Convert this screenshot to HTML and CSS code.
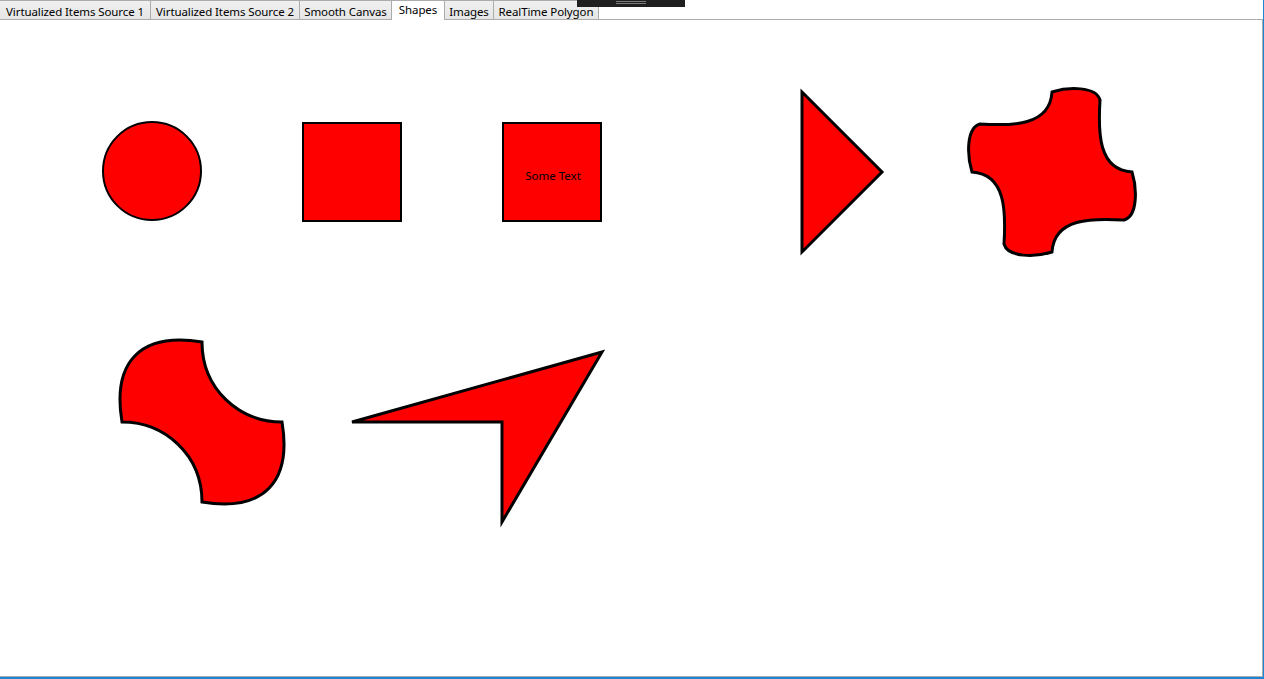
FILE: index.html
```html
<!DOCTYPE html>
<html>
<head>
<meta charset="utf-8">
<link rel="stylesheet" href="styles.css">
</head>
<body>
<div class="window">
  <div class="tabstrip">
    <div class="tab tab-vis1">Virtualized Items Source 1</div>
    <div class="tab tab-vis2">Virtualized Items Source 2</div>
    <div class="tab tab-smooth">Smooth Canvas</div>
    <div class="tab tab-shapes selected">Shapes</div>
    <div class="tab tab-images">Images</div>
    <div class="tab tab-poly">RealTime Polygon</div>
  </div>
  <div class="panel">
    <svg class="canvas" viewBox="0 20 1262 656" width="1262" height="656">
      <g fill="#ff0000" stroke="#000" stroke-linejoin="miter">
        <circle cx="152" cy="171" r="49" stroke-width="2"/>
        <rect x="303" y="123" width="98" height="98" stroke-width="2"/>
        <rect x="503" y="123" width="98" height="98" stroke-width="2"/>
        <polygon points="802,92 882,172 802,252" stroke-width="3"/>
        <path stroke-width="3" d="M1052,92 C1068,87 1096,86 1100,100 C1098,132 1098,170 1132,172 C1137,188 1138,216 1124,220 C1092,218 1054,218 1052,252 C1036,257 1008,258 1004,244 C1006,212 1006,174 972,172 C967,156 966,128 980,124 C1012,126 1050,126 1052,92 Z"/>
        <path stroke-width="3" d="M202,342 C140,332 112,362 122,422 C165,422 202,455 202,502 C264,512 292,482 282,422 C239,422 202,389 202,342 Z"/>
        <polygon points="352,422 602,352 502,522 502,422" stroke-width="3"/>
      </g>
      <text class="shape-text" x="553" y="180" text-anchor="middle">Some Text</text>
    </svg>
  </div>
  <div class="titlebar-grip"><span class="grip-line"></span><span class="grip-line"></span></div>
</div>
</body>
</html>
```
FILE: styles.css
```css
html, body {
  margin: 0;
  padding: 0;
  background: #ffffff;
}
body {
  width: 1264px;
  height: 679px;
  overflow: hidden;
  font-family: "Noto Sans", "Open Sans", "Liberation Sans", sans-serif;
}
.window {
  position: relative;
  width: 1264px;
  height: 679px;
  box-sizing: border-box;
  border-right: 1px solid #1a86d9;
  border-bottom: 2px solid #1a86d9;
  display: flex;
  flex-direction: column;
  background: #ffffff;
}
.tabstrip {
  display: flex;
  height: 19px;
  flex: none;
  align-items: flex-start;
  position: relative;
  z-index: 1;
}
.tab {
  flex: none;
  box-sizing: border-box;
  height: 19px;
  border: 1px solid #acacac;
  border-bottom: none;
  border-left: none;
  background: linear-gradient(#f0f0f0, #e5e5e5);
  font-size: 11.5px;
  line-height: 17px;
  padding-top: 2px;
  color: #000;
  text-align: center;
  white-space: nowrap;
  letter-spacing: -0.1px;
}
.tab-vis1 { border-left: 1px solid #acacac; margin-left: -1px; width: 152px; }
.tab-vis2 { width: 149px; }
.tab-smooth { width: 92px; }
.tab-shapes { width: 53px; }
.tab-images { width: 49px; }
.tab-poly { width: 105px; }
.tab.selected {
  background: #ffffff;
  height: 20px;
  padding-top: 0;
  line-height: 17px;
}
.panel {
  flex: 1;
  margin-left: -1px;
  border: 1px solid #acacac;
  background: #ffffff;
  overflow: hidden;
}
.canvas {
  display: block;
}
.shape-text {
  font-family: "Noto Sans", "Open Sans", sans-serif;
  font-size: 11.5px;
  fill: #000;
}
.titlebar-grip {
  position: absolute;
  left: 577px;
  top: 0;
  width: 108px;
  height: 7px;
  background: #1f1f1f;
  z-index: 2;
  display: flex;
  flex-direction: column;
  align-items: center;
  padding-top: 1px;
  box-sizing: border-box;
  gap: 1px;
}
.grip-line {
  display: block;
  width: 30px;
  height: 1px;
  background: #7a7a7a;
}
```
